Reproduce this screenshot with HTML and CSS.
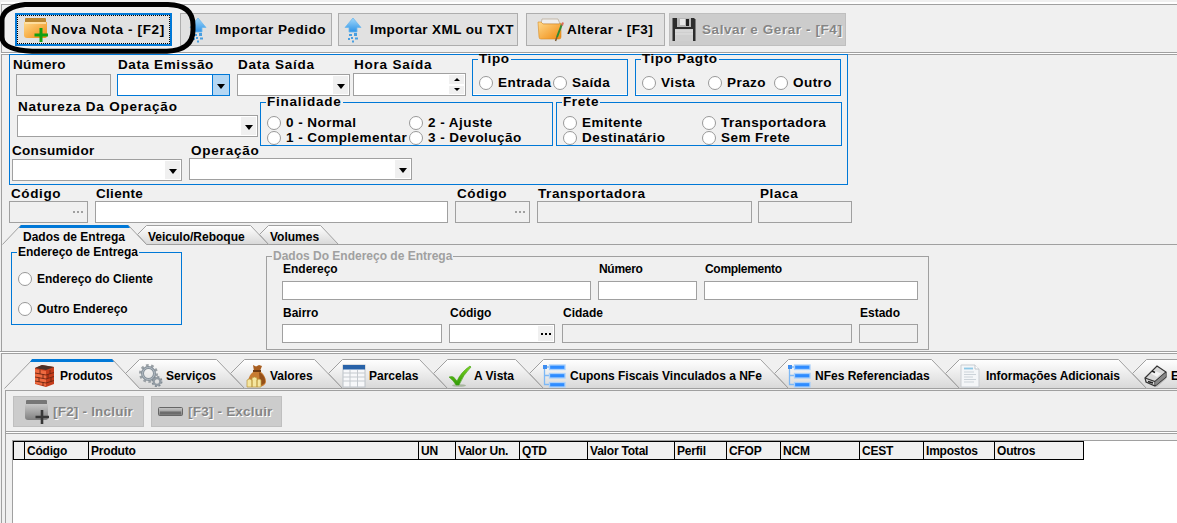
FILE: index.html
```html
<!DOCTYPE html>
<html lang="pt-BR">
<head>
<meta charset="utf-8">
<title>Nota Fiscal</title>
<link rel="stylesheet" href="styles.css">
</head>
<body>
<svg class="defs" width="0" height="0">
  <defs>
    <linearGradient id="gold" x1="0" y1="0" x2="1" y2="1"><stop offset="0" stop-color="#ffd98a"/><stop offset="1" stop-color="#f08a10"/></linearGradient>
    <linearGradient id="blue" x1="0" y1="0" x2="0" y2="1"><stop offset="0" stop-color="#9fd8fb"/><stop offset="1" stop-color="#2f93e6"/></linearGradient>
    <linearGradient id="grey" x1="0" y1="0" x2="0" y2="1"><stop offset="0" stop-color="#c8c8c8"/><stop offset="1" stop-color="#808080"/></linearGradient>
    <linearGradient id="tab" x1="0" y1="0" x2="0" y2="1"><stop offset="0" stop-color="#ffffff"/><stop offset="1" stop-color="#d8d8d8"/></linearGradient>
    <linearGradient id="check" x1="0" y1="0" x2="0" y2="1"><stop offset="0" stop-color="#7ed321"/><stop offset="1" stop-color="#2f9a05"/></linearGradient>
    <symbol id="i-arrow" viewBox="0 0 18 26">
      <path d="M9 1 17 10.500H13V15H5V10.500H1Z" fill="url(#blue)" stroke="#6db8ee" stroke-width=".8"/>
      <path d="M5 17h3v2H5zM10 16h3v3h-3zM7 20h2v2H7zM11 20.500h3v2h-3zM4 21h2v2H4zM8 23.500h2v2H8z" fill="#4a9fe0"/>
    </symbol>
    <symbol id="i-tree" viewBox="0 0 24 24">
      <path d="M2.500 3V20.500H8M2.500 11.500H8M2.500 3H8" fill="none" stroke="#7db8f5" stroke-width="1.300"/>
      <rect x="1" y="1" width="4" height="4" fill="#3d8df0"/>
      <g fill="#2f8cff" stroke="#a9d0fb" stroke-width="1.300"><rect x="7.500" y="1" width="15.500" height="4.500"/><rect x="7.500" y="9.500" width="15.500" height="4.500"/><rect x="7.500" y="18.500" width="15.500" height="4.500"/></g>
    </symbol>
  </defs>
</svg>
<main class="window">
  <header class="toolbar">
    <button class="btn btn-new"><svg width="25" height="26" viewBox="0 0 25 26"><path d="M2 2q0-1 1-1H22q1 0 1 1V5H2Z" fill="#b9852f"/><path d="M1 5H24V19q0 2-2 2H4q-3 0-3-3Z" fill="url(#gold)"/><path d="M2 6H23" stroke="#ffe6b0" stroke-width="1.500"/><path d="M18 11V25M11.500 18H25" stroke="#12a012" stroke-width="3"/></svg><span>Nova Nota - [F2]</span></button>
    <button class="btn btn-order"><svg width="18" height="26"><use href="#i-arrow"/></svg><span>Importar Pedido</span></button>
    <button class="btn btn-xml"><svg width="18" height="26"><use href="#i-arrow"/></svg><span>Importar XML ou TXT</span></button>
    <button class="btn btn-edit"><svg width="27" height="26" viewBox="0 0 27 26"><path d="M4 7 5 2H21L23 7Z" fill="#eee" stroke="#b8a890" stroke-width=".7"/><path d="M1 5H4L6 7H22L24 6V20q0 2-2 2H4q-2 0-2-2Z" fill="url(#gold)" stroke="#d68b25" stroke-width=".6"/><path d="M25 7 20 20" stroke="#2c8a35" stroke-width="2"/><path d="M20 20 18.500 24" stroke="#7a5a30" stroke-width="1.500"/><path d="M25 8.500 26 5.500" stroke="#dd6a5a" stroke-width="2"/></svg><span>Alterar - [F3]</span></button>
    <button class="btn btn-save off"><svg width="24" height="25" viewBox="0 0 24 25"><path d="M1 1H22L23.500 2.500V24H.500V1.500Z" fill="#2d2d2d"/><rect x="5" y="1" width="14" height="9" fill="#b9b9b9"/><rect x="8" y="2" width="5" height="6" fill="#e8e8e8"/><rect x="14" y="2" width="3" height="7" fill="#222"/><rect x="3" y="12" width="18" height="12" fill="#cfcfcf"/><path d="M3 14H21M3 17H21" stroke="#e0e0e0"/></svg><span>Salvar e Gerar - [F4]</span></button>
    <svg class="marker" width="200" height="58" viewBox="0 0 200 58"><path d="M25 4.500H168Q193 5 193 25V30Q193 50 167 51.300H32Q2 50 2 37V20Q3 7 25 4.500Z" fill="none" stroke="#000" stroke-width="5"/></svg>
  </header>

  <section class="form">
    <div class="panel">
      <div class="row-a">
        <div class="field f-num"><label class="s1">Número</label><div class="box ro"></div></div>
        <div class="field"><label class="s2">Data Emissão</label><div class="box combo hot"><i></i></div></div>
        <div class="field"><label class="s3">Data Saída</label><div class="box combo"><i></i></div></div>
        <div class="field f-time"><label class="s3">Hora Saída</label><div class="box spin"><i></i><i></i></div></div>
        <div class="group g-type"><b class="s2">Tipo</b><div class="opts"><span>Entrada</span><span>Saída</span></div></div>
        <div class="group g-pay"><b class="s2">Tipo Pagto</b><div class="opts"><span>Vista</span><span>Prazo</span><span>Outro</span></div></div>
      </div>
      <div class="row-b">
        <div class="field"><label class="s3">Natureza Da Operação</label><div class="box combo"><i></i></div></div>
        <div class="group g-purpose"><b class="s3">Finalidade</b><div class="opts"><span>0 - Normal</span><span>2 - Ajuste</span><span>1 - Complementar</span><span>3 - Devolução</span></div></div>
        <div class="group g-freight"><b class="s2">Frete</b><div class="opts"><span>Emitente</span><span>Transportadora</span><span>Destinatário</span><span>Sem Frete</span></div></div>
      </div>
      <div class="row-c">
        <div class="field"><label class="s1">Consumidor</label><div class="box combo"><i></i></div></div>
        <div class="field f-op"><label class="s3">Operação</label><div class="box combo"><i></i></div></div>
      </div>
    </div>
    <div class="row-d">
      <div class="field"><label class="s2">Código</label><div class="box ro dots"><i></i></div></div>
      <div class="field"><label class="s1">Cliente</label><div class="box"></div></div>
      <div class="field"><label class="s2">Código</label><div class="box ro dots"><i></i></div></div>
      <div class="field"><label class="s2">Transportadora</label><div class="box ro"></div></div>
      <div class="field"><label class="s2">Placa</label><div class="box ro"></div></div>
    </div>

    <nav class="tabs tabs-top">
      <svg class="shape" width="1177" height="22" viewBox="0 0 1177 22">
        <g fill="url(#tab)" stroke="#a0a0a0"><path d="M259.500 10.500 268.500 1.500H320.500L338.500 20.500H268.500Z"/><path d="M137.500 10.500 146.500 1.500H250.500L268.500 20.500H146.500Z"/></g>
        <path d="M338 20.500H1177" stroke="#a0a0a0"/>
        <path d="M2.500 20.500 20.500 1.500H128.500L146.500 20.500" fill="#f0f0f0" stroke="#a0a0a0"/>
        <path d="M19 4 21 1H128L130 4Z" fill="#0078d7"/>
      </svg>
      <div class="names"><span>Dados de Entrega</span><span>Veiculo/Reboque</span><span>Volumes</span></div>
    </nav>
    <div class="delivery">
      <div class="group g-addr"><b>Endereço de Entrega</b><div class="opts"><span>Endereço do Cliente</span><span>Outro Endereço</span></div></div>
      <div class="group g-data"><b>Dados Do Endereço de Entrega</b>
        <div class="line-1">
          <div class="field"><label>Endereço</label><div class="box"></div></div>
          <div class="field"><label>Número</label><div class="box"></div></div>
          <div class="field"><label>Complemento</label><div class="box"></div></div>
        </div>
        <div class="line-2">
          <div class="field"><label>Bairro</label><div class="box"></div></div>
          <div class="field"><label>Código</label><div class="box dots live"><i></i></div></div>
          <div class="field"><label>Cidade</label><div class="box ro"></div></div>
          <div class="field"><label>Estado</label><div class="box ro"></div></div>
        </div>
      </div>
    </div>
  </section>

  <section class="lower">
    <nav class="tabs tabs-main">
      <svg class="shape" width="1177" height="32" viewBox="0 0 1177 32">
        <g fill="url(#tab)" stroke="#a0a0a0">
          <path d="M1132.500 15.500 1146.500 1.500H1190V30.500H1146.500Z"/>
          <path d="M945.500 15.500 959.500 1.500H1118.500L1146.500 30.500H959.500Z"/>
          <path d="M774.500 15.500 788.500 1.500H931.500L959.500 30.500H788.500Z"/>
          <path d="M529.500 15.500 543.500 1.500H760.500L788.500 30.500H543.500Z"/>
          <path d="M433.500 15.500 447.500 1.500H515.500L543.500 30.500H447.500Z"/>
          <path d="M328.500 15.500 342.500 1.500H419.500L447.500 30.500H342.500Z"/>
          <path d="M230.500 15.500 244.500 1.500H314.500L342.500 30.500H244.500Z"/>
          <path d="M125.500 15.500 139.500 1.500H216.500L244.500 30.500H139.500Z"/>
        </g>
        <path d="M4.500 30.500 32.500 1.500H112.500L139.500 30.500" fill="#f0f0f0" stroke="#a0a0a0"/>
        <path d="M30 4 32 1H112L114 4Z" fill="#0078d7"/>
      </svg>
      <div class="names">
        <span><svg width="22" height="24" viewBox="0 0 22 24"><path d="M1 4 8 1 20 3V20L12 23 1 20Z" fill="#c43d1c"/><path d="M1 4 8 1 20 3 12 6Z" fill="#4a3028"/><path d="M1 5 12 7V22L1 19.500Z" fill="#ee6a40"/><path d="M1 9 12 11 20 8.500M1 13 12 15 20 12.500M1 17 12 19 20 16.500M6 5.500V10M9 10V14.500M5 13.500V18M9 18V22M16 6V10M17 14V18M14 10V14" fill="none" stroke="#6e2612" stroke-width=".9"/></svg>Produtos</span>
        <span><svg width="24" height="24" viewBox="0 0 24 24"><g fill="none"><circle cx="9.500" cy="9.500" r="8" stroke="#9aa0a5" stroke-width="3" stroke-dasharray="2.600 2.400"/><circle cx="9.500" cy="9.500" r="6" stroke="#88939c" stroke-width="3"/><circle cx="9.500" cy="9.500" r="6" stroke="#b4bcc4" stroke-width="1"/><circle cx="18" cy="17.500" r="4.500" stroke="#7f8991" stroke-width="2" stroke-dasharray="2 1.500"/><circle cx="18" cy="17.500" r="3.300" stroke="#929ba3" stroke-width="2.200"/></g></svg>Serviços</span>
        <span><svg width="22" height="24" viewBox="0 0 22 24"><path d="M7 1 10 2.500 13 1 16 2 14 7H8Z" fill="#a85e20"/><path d="M8 7H14Q20 12 20 18Q19 23 11 23T2 18Q2 12 8 7Z" fill="#c77b31"/><path d="M13 8Q20 12 19 19L14 22Z" fill="#94501a"/><path d="M7 7H15" stroke="#6e3a12" stroke-width="2"/><g fill="#f5e6a0" stroke="#b99336" stroke-width=".7"><path d="M1 16Q3.500 14 6 16V23H1ZM6 14Q8.500 12 11 14V23H6ZM11 16Q13 14 15 16V23H11Z"/></g></svg>Valores</span>
        <span><svg width="24" height="24" viewBox="0 0 24 24"><rect x="1" y="1" width="22" height="22" fill="#f7f8fa" stroke="#bcc2c8"/><rect x="1" y="1" width="22" height="4.500" fill="#2862a8"/><path d="M1 9H23M1 13H23M1 17H23M8 6V23M15.500 6V23" stroke="#c4c9ce"/></svg>Parcelas</span>
        <span><svg width="24" height="24" viewBox="0 0 24 24"><ellipse cx="11" cy="21.500" rx="7" ry="1.300" fill="#a8b5a0"/><path d="M1 13Q4 12 5.500 13L9 17Q13 8 22 2L23 3Q15 11 11 21H8Q6 17 1 13Z" fill="url(#check)" stroke="#3e9d12" stroke-width=".6"/></svg>A Vista</span>
        <span><svg width="24" height="24"><use href="#i-tree"/></svg>Cupons Fiscais Vinculados a NFe</span>
        <span><svg width="24" height="24"><use href="#i-tree"/></svg>NFes Referenciadas</span>
        <span><svg width="20" height="24" viewBox="0 0 20 24"><path d="M1 1H15L19 5V23H1Z" fill="#f4f6f8" stroke="#c9cdd2"/><path d="M15 1V5H19" fill="#fff" stroke="#c0c5ca"/><path d="M4 4.500H13" stroke="#8fc9e6" stroke-width="1.800"/><path d="M4 8H14M4 10.500H16M4 13H13M4 15.500H16M4 18H14" stroke="#ccd3d9"/></svg>Informações Adicionais</span>
        <span><svg width="24" height="24" viewBox="0 0 24 24"><path d="M11 22 23 12 22 15 13 23Z" fill="#bbb"/><path d="M1 14 13 2 22 8V13L11 22 2 18Z" fill="#d8d8d8" stroke="#333" stroke-width="1.200"/><path d="M1 14 11 17.500 22 8M11 17.500V22" fill="none" stroke="#333" stroke-width="1.200"/><path d="M11.500 17.500 21.500 8.700V13L11.500 21.500Z" fill="#888"/><path d="M7 9.500 10 6.500 17 9.500 13 13Z" fill="#f4f4f4"/><path d="M8 7 11 8.500M4 17.500 9 19" stroke="#222" stroke-width="1.500"/></svg>E</span>
      </div>
    </nav>
    <div class="page">
      <div class="actions">
        <button class="btn act off"><svg width="25" height="26" viewBox="0 0 25 26"><path d="M2 2q0-1 1-1H22q1 0 1 1V5H2Z" fill="#777"/><path d="M1 5H24V19q0 2-2 2H4q-3 0-3-3Z" fill="url(#grey)"/><path d="M18 11V25M11.500 18H25" stroke="#383838" stroke-width="2.600"/></svg><span>[F2] - Incluir</span></button>
        <button class="btn act off"><svg width="25" height="9" viewBox="0 0 25 9"><rect x=".5" y=".5" width="24" height="8" rx="1" fill="url(#grey)" stroke="#666"/><path d="M2 6H23" stroke="#6c6c6c" stroke-width="3"/></svg><span>[F3] - Excluir</span></button>
      </div>
      <div class="grid">
        <div class="head"><span></span><span>Código</span><span>Produto</span><span>UN</span><span>Valor Un.</span><span>QTD</span><span>Valor Total</span><span>Perfil</span><span>CFOP</span><span>NCM</span><span>CEST</span><span>Impostos</span><span>Outros</span></div>
      </div>
    </div>
  </section>
</main>
</body>
</html>
```
FILE: styles.css
```css
* { box-sizing: border-box; }
body {
  margin: 0;
  background: #f0f0f0;
  color: #000;
  font: bold 12px/14px "Liberation Sans", Arial, sans-serif;
  overflow: hidden;
}
.defs { position: absolute; }
.window { width: 1177px; height: 523px; overflow: hidden; white-space: nowrap; }

/* Toolbar */
.toolbar {
  position: relative;
  display: flex;
  height: 49px;
  margin: 4px 0 0 1px;
  padding: 8px 0 0 13px;
  border: 1px solid #a0a0a0;
  border-right: 0;
  box-shadow: 0 -2px #fff, 0 1px #fff;
}
.btn {
  display: flex;
  flex: none;
  align-items: center;
  height: 33px;
  padding: 0;
  border: 1px solid #adadad;
  background: #e1e1e1;
  font: bold 13.5px/18px "Liberation Sans", Arial, sans-serif;
  letter-spacing: .5px;
  color: #000;
}
.btn-new { width: 157px; border: 2px solid #0078d7; outline: 1px dotted #000; outline-offset: -3px; padding-left: 6px; gap: 3px; letter-spacing: .65px; }
.btn-order { width: 152px; margin-left: 8px; padding-left: 8px; gap: 8px; }
.btn-xml { width: 180px; margin-left: 6px; padding-left: 5px; gap: 8px; letter-spacing: .4px; }
.btn-edit { width: 139px; margin-left: 8px; padding-left: 10px; gap: 3px; letter-spacing: .42px; }
.btn-save { width: 177px; margin-left: 4px; padding-left: 2px; gap: 6px; letter-spacing: .58px; }
.off { background: #cccccc; border-color: #bfbfbf; color: #858585; text-shadow: 1px 1px #fff; }
.marker { position: absolute; left: -2px; top: -5px; }

/* Fields */
.field { display: flex; flex-direction: column; min-width: 0; }
.field label { font-size: 13.5px; line-height: 19px; height: 19px; padding-left: 1px; }
.s1 { letter-spacing: .3px; }
.s2 { letter-spacing: .62px; }
.s3 { letter-spacing: .78px; }
.box { height: 22px; flex: none; border: 1px solid #a0a0a0; background: #fff; display: flex; justify-content: flex-end; padding: 1px; }
.box.ro { background: #f0f0f0; }
.combo i { width: 15px; background: #f0f0f0; display: flex; align-items: center; justify-content: center; }
.combo i::after { content: ""; border: 4.5px solid transparent; border-top: 5px solid #000; border-bottom: 0; margin-top: 2px; }
.combo.hot { border-color: #0078d7; padding: 0; }
.combo.hot i { width: 17px; background: #b5d7f3; border-left: 1px solid #0078d7; }
.spin { flex-direction: column; align-items: flex-end; gap: 2px; }
.spin i { width: 15px; flex: 1; background: #f0f0f0; display: flex; align-items: center; justify-content: center; }
.spin i::after { content: ""; border: 3px solid transparent; border-bottom: 3px solid #000; border-top: 0; }
.spin i + i::after { border-top: 3px solid #000; border-bottom: 0; }
.dots i { width: 16px; display: flex; align-items: center; justify-content: center; }
.dots i::after { content: ""; width: 2px; height: 2px; background: #a0a0a0; box-shadow: -4px 0 #a0a0a0, 4px 0 #a0a0a0; }
.dots.live i { background: #f0f0f0; width: 15px; }
.dots.live i::after { background: #000; box-shadow: -4px 0 #000, 4px 0 #000; }

/* Captioned groups and radio options */
.group { border: 1px solid #0078d7; flex: none; }
.group > b { display: block; width: fit-content; font-size: 13.5px; line-height: 18px; height: 18px; margin: -10px 0 0 5px; padding: 0 1px; background: linear-gradient(#f0f0f0, #f0f0f0) 0 8px / 100% 4px no-repeat; }
.opts { display: grid; padding-left: 6px; grid-auto-rows: 15px; }
.opts span { display: flex; align-items: center; gap: 5px; font-size: 13.5px; letter-spacing: .45px; }
.opts span::before { content: ""; width: 12px; height: 12px; border: 1px solid #999; border-radius: 50%; background: #fff; flex: none; }

/* Invoice data */
.form { height: 297px; margin: 1px 0 0 1px; border-left: 1px solid #a0a0a0; border-top: 1px solid #a0a0a0; }
.panel { width: 839px; height: 131px; margin: -1px 0 0 7px; border: 1px solid #0078d7; }
.row-a { display: flex; padding-left: 6px; height: 41px; }
.row-a .field { width: 113px; margin-right: 7px; }
.row-a .f-num { width: 95px; margin-right: 6px; }
.row-a .f-num label { margin-left: -4px; }
.row-a .field:nth-child(3) { margin-right: 3px; }
.row-a .f-time { margin-right: 6px; }
.f-time label { height: 18px; }
.f-time .box { height: 23px; }
.g-type, .g-pay { margin-top: 4px; height: 37px; box-shadow: inset 0 -1px #fff; }
.g-type { width: 156px; margin-right: 7px; }
.g-pay { width: 206px; }
.g-type .opts { grid-template-columns: 74px 70px; margin-top: 7px; }
.g-pay .opts { grid-template-columns: 66px 66px 60px; margin-top: 7px; }
.row-b { display: flex; padding-left: 7px; height: 41px; align-items: flex-start; }
.row-b .field { width: 241px; margin-right: 2px; }
.row-b .field label { line-height: 22px; }
.g-purpose, .g-freight { height: 44px; margin-top: 6px; }
.g-purpose { width: 293px; margin-right: 3px; }
.g-freight { width: 286px; }
.g-purpose .opts { grid-template-columns: 142px 140px; margin-top: 4px; }
.g-freight .opts { grid-template-columns: 139px 130px; margin-top: 4px; }
.row-c { display: grid; grid-template-columns: 170px 223px; column-gap: 7px; padding-left: 2px; }
.row-c label { height: 22px; line-height: 27px; padding-left: 0; }
.row-c .f-op label { height: 21px; padding-left: 2px; }
.row-d { display: grid; grid-template-columns: 79px 353px 75px 215px 94px; column-gap: 7px; padding-left: 7px; height: 39px; }
.row-d label { height: 16px; line-height: 18px; }
.row-d .field:nth-child(odd) label { padding-left: 2px; }
.row-d .field:last-child { margin: 0 1px 0 -1px; }

/* Tab strips */
.tabs { display: grid; }
.tabs > * { grid-area: 1 / 1; }
.shape { display: block; }
.names { display: grid; align-items: center; }
.tabs-top { height: 22px; margin-left: -2px; }
.tabs-top .names { grid-template-columns: 125px 122px 80px; padding: 3px 0 0 23px; height: 22px; }
.tabs-main { height: 32px; }
.tabs-main .names { grid-template-columns: 105px 107px 96px 106px 94px 245px 173px 184px 32px; padding: 3px 0 0 34px; height: 32px; }
.names svg { flex: none; }
.tabs-main .names span { display: flex; align-items: center; gap: 3px; }
.tabs-main .names span:nth-child(1), .tabs-main .names span:nth-child(6), .tabs-main .names span:nth-child(7) { gap: 4px; }
.tabs-main .names span:nth-child(3), .tabs-main .names span:nth-child(5) { gap: 2px; }
.tabs-main .names span:nth-child(8) { gap: 6px; letter-spacing: -.05px; }

/* Delivery address */
.delivery { display: grid; grid-template-columns: 171px 663px; column-gap: 84px; padding: 6px 0 0 9px; align-items: start; }
.delivery .group > b, .delivery .opts span, .delivery label { font-size: 12px; letter-spacing: 0; }
.g-addr { height: 73px; }
.g-addr .opts { grid-auto-rows: 30px; margin-top: 3px; }
.g-addr .opts span { gap: 5px; }
.g-data { height: 94px; margin-top: 4px; border-color: #a0a0a0; }
.g-data > b { color: #a0a0a0; }
.g-data .box { height: 19px; }
.line-1, .line-2 { display: grid; column-gap: 7px; padding-left: 15px; }
.line-1 { grid-template-columns: 309px 99px 214px; }
.line-2 { grid-template-columns: 160px 106px 290px 59px; }
.line-1 label { height: 16px; line-height: 9px; }
.line-2 label { height: 24px; line-height: 27px; }
.line-1 .field:nth-child(2) label, .line-1 .field:nth-child(3) label { letter-spacing: -.3px; }

/* Products area */
.lower { border-top: 1px solid #a0a0a0; padding-top: 1px; background: linear-gradient(#a0a0a0, #a0a0a0) 1px 2px / 1px 200px no-repeat; box-shadow: inset 0 1px #fff; }
.lower::before { content: ""; display: block; margin-left: 1px; height: 4px; border-top: 1px solid #a0a0a0; }
.page { margin-left: 5px; border-left: 1px solid #a0a0a0; border-top: 1px solid #a0a0a0; height: 135px; }
.actions { display: grid; grid-template-columns: 131px 131px; column-gap: 7px; height: 41px; padding: 5px 0 0 7px; border-bottom: 1px solid #a0a0a0; box-shadow: 0 1px #fff, 0 2px #a0a0a0; }
.act { height: 31px; padding-left: 10px; gap: 4px; letter-spacing: .2px; }
.act + .act { padding-left: 6px; gap: 5px; }
.grid { margin: 8px 0 0 6px; height: 85px; background: #fff; border-top: 1px solid #a0a0a0; border-left: 1px solid #a0a0a0; }
.head { display: grid; grid-template-columns: 11px 64px 330px 37px 64px 68px 87px 52px 54px 79px 64px 71px 89px; width: 1071px; height: 19px; background: #f0f0f0; border: 1px solid #000; border-right: 0; }
.head span { border-right: 1px solid #000; padding-left: 2px; line-height: 18px; letter-spacing: -.2px; }
```
